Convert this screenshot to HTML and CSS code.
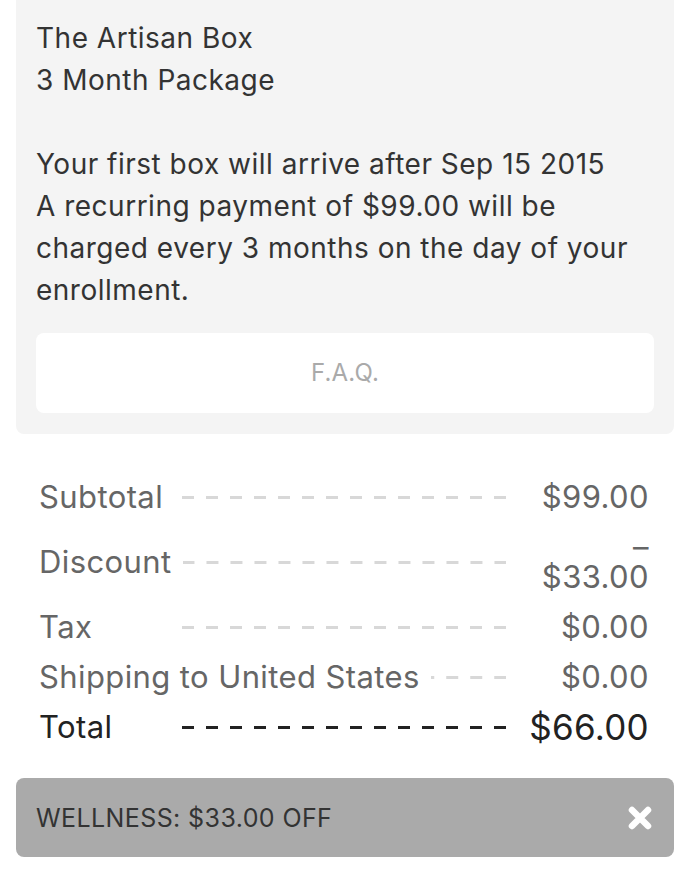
FILE: index.html
```html
<!DOCTYPE html>
<html lang="en">
<head>
  <meta charset="UTF-8">
  <meta name="viewport" content="width=device-width, initial-scale=1.0">
  <title>Checkout | The Artisan Box</title>
  <link rel="stylesheet" href="styles.css">
</head>
<body>
  <div class="package-card">
    <p class="package-name">The Artisan Box<br>3 Month Package</p>
    <p class="package-info">
      Your first box will arrive after Sep 15 2015<br>
      A recurring payment of $99.00 will be charged every 3 months on the day of your enrollment.
    </p>
    <a class="faq-btn" href="#">F.A.Q.</a>
  </div>

  <div class="summary">
    <div class="summary-row">
      <span class="label">Subtotal</span>
      <span class="leader"></span>
      <span class="value">$99.00</span>
    </div>
    <div class="summary-row">
      <span class="label">Discount</span>
      <span class="leader"></span>
      <span class="value"><span class="neg">–</span>$33.00</span>
    </div>
    <div class="summary-row">
      <span class="label">Tax</span>
      <span class="leader"></span>
      <span class="value">$0.00</span>
    </div>
    <div class="summary-row">
      <span class="label">Shipping to United States</span>
      <span class="leader"></span>
      <span class="value">$0.00</span>
    </div>
    <div class="summary-row total">
      <span class="label">Total</span>
      <span class="leader"></span>
      <span class="value">$66.00</span>
    </div>
  </div>

  <div class="promo">
    <span class="promo-text">WELLNESS: $33.00 OFF</span>
    <button class="promo-remove" aria-label="Remove code">
      <svg width="26" height="26" viewBox="0 0 26 26">
        <path d="M5 5 L21 21 M21 5 L5 21" stroke="#fff" stroke-width="6.5" stroke-linecap="round"/>
      </svg>
    </button>
  </div>
</body>
</html>
```

FILE: styles.css
```css
* {
  margin: 0;
  padding: 0;
  box-sizing: border-box;
}
body {
  background: #fff;
  font-family: Inter, Roboto, "Liberation Sans", sans-serif;
  color: #333;
  padding: 0 8px 0 16px;
}
.package-card {
  background: #f4f4f4;
  border-radius: 0 0 8px 8px;
  padding: 17px 20px 21px;
  font-size: 28px;
  line-height: 42px;
  letter-spacing: 0.5px;
}
.package-name {
  margin-bottom: 42px;
}
.package-info {
  margin-bottom: 22px;
}
.faq-btn {
  display: flex;
  align-items: center;
  justify-content: center;
  height: 80px;
  background: #fff;
  border-radius: 8px;
  color: #aaa;
  font-size: 24px;
  letter-spacing: 0.2px;
  text-decoration: none;
}
.summary {
  padding: 38px 25px 0 23px;
}
.summary-row {
  display: flex;
  align-items: center;
  padding: 10px 0;
  font-size: 31px;
  line-height: 30px;
  letter-spacing: 0.4px;
  color: #666;
}
.summary-row .label {
  min-width: 131px;
  white-space: nowrap;
}
.leader {
  flex: 1;
  height: 3px;
  margin: 0 12px 0 11px;
  background-image: linear-gradient(to right, transparent 50%, #d8d8d8 50%);
  background-size: 24px 3px;
  background-position: right center;
  background-repeat: repeat-x;
}
.summary-row .value {
  width: 131px;
  text-align: right;
}
.neg {
  display: block;
}
.summary-row.total {
  color: #222;
}
.summary-row.total .value {
  font-size: 35px;
  letter-spacing: 0.3px;
}
.summary-row.total .leader {
  background-image: linear-gradient(to right, transparent 50%, #222 50%);
}
.promo {
  margin-top: 26px;
  height: 79px;
  background: #aaa;
  border-radius: 8px;
  display: flex;
  align-items: center;
  justify-content: space-between;
  padding: 0 21px 0 20px;
}
.promo-text {
  font-size: 25px;
  letter-spacing: 0.4px;
  color: #333;
}
.promo-remove {
  background: none;
  border: none;
  cursor: pointer;
  display: flex;
}
```
